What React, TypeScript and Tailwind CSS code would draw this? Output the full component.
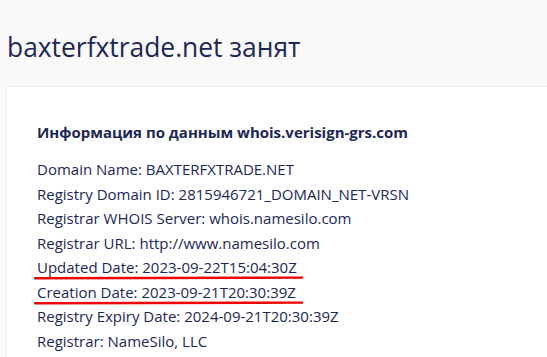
import React from "react";

const lines = [
  "Domain Name: BAXTERFXTRADE.NET",
  "Registry Domain ID: 2815946721_DOMAIN_NET-VRSN",
  "Registrar WHOIS Server: whois.namesilo.com",
  "Registrar URL: http://www.namesilo.com",
  "Updated Date: 2023-09-22T15:04:30Z",
  "Creation Date: 2023-09-21T20:30:39Z",
  "Registry Expiry Date: 2024-09-21T20:30:39Z",
  "Registrar: NameSilo, LLC",
];

function Underline() {
  return (
    <svg
      className="absolute left-[-3px] top-[20px] pointer-events-none"
      width="272"
      height="6"
      viewBox="0 0 272 6"
    >
      <path
        d="M1 3.2 C 60 2.4, 150 2.2, 268 2.6"
        stroke="#f00000"
        strokeWidth="2.4"
        fill="none"
        strokeLinecap="round"
      />
    </svg>
  );
}

export default function App() {
  return (
    <div
      className="w-[547px] h-[357px] overflow-hidden bg-[#f9f9f9] text-[#1c2756]"
      style={{ fontFamily: '"Open Sans", "Noto Sans", sans-serif' }}
    >
      <div className="pl-[7px] pt-[29px]">
        <h1 className="text-[26.4px] leading-[36px] font-normal">
          baxterfxtrade.net занят
        </h1>
        <div className="mt-[22px] w-[600px] bg-white shadow-[0_0_3px_rgba(0,0,0,0.10)] pl-[30px] pt-[34px] pb-10">
          <div className="text-[15px] leading-[22px] font-bold">
            Информация по данным whois.verisign-grs.com
          </div>
          <div className="mt-[14px] text-[15px] leading-[24.5px]">
            {lines.map((l, i) => (
              <div key={i}>
                {i === 4 || i === 5 ? (
                  <span className="relative inline-block">
                    {l}
                    <Underline />
                  </span>
                ) : (
                  l
                )}
              </div>
            ))}
          </div>
        </div>
      </div>
    </div>
  );
}
